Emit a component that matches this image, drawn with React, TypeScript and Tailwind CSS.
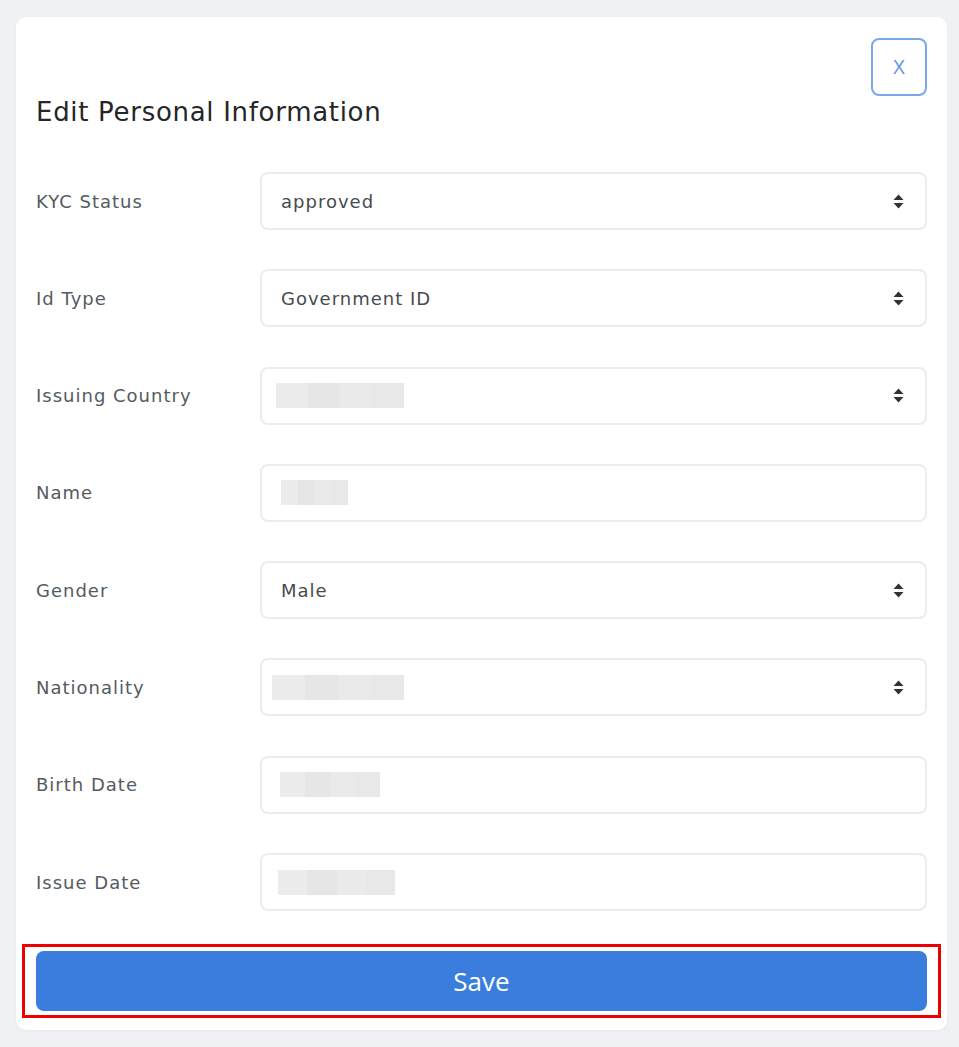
import React from "react";

const Caret = () => (
  <svg width="11" height="15" viewBox="0 0 11 15" className="shrink-0">
    <path d="M5.5 0.5 L10.5 6 L0.5 6 Z" fill="#2f3237" />
    <path d="M5.5 14.5 L10.5 9 L0.5 9 Z" fill="#2f3237" />
  </svg>
);

type Row = { label: string; value?: string; blur?: [number, number]; select: boolean };

const rows: Row[] = [
  { label: "KYC Status", value: "approved", select: true },
  { label: "Id Type", value: "Government ID", select: true },
  { label: "Issuing Country", blur: [16, 128], select: true },
  { label: "Name", blur: [21, 67], select: false },
  { label: "Gender", value: "Male", select: true },
  { label: "Nationality", blur: [12, 132], select: true },
  { label: "Birth Date", blur: [20, 100], select: false },
  { label: "Issue Date", blur: [18, 117], select: false },
];

const geo = { fontFamily: "'DejaVu Sans', 'Open Sans', sans-serif" };

export default function App() {
  return (
    <div
      className="min-h-[1047px] w-[959px] bg-[#f0f1f5] pt-[17px] pl-[16px]"
      style={{ fontFamily: "'Open Sans', 'Noto Sans', sans-serif" }}
    >
      <div className="w-[931px] rounded-[10px] bg-white px-5 pt-[21px] pb-[12px] shadow-[0_1px_3px_rgba(0,0,0,0.04)]">
        <div className="flex justify-end">
          <button className="flex h-[58px] w-[56px] items-center justify-center rounded-[8px] border-2 border-[#7aa8ea] text-[20px] text-[#5b94e6]">
            X
          </button>
        </div>
        <h2 className="-mt-[2px] text-[26px] leading-[36px] tracking-[0.7px] text-[#262626]" style={geo}>
          Edit Personal Information
        </h2>
        <div className="mt-[42px] flex flex-col gap-[39.3px]">
          {rows.map((r) => (
            <div key={r.label} className="flex items-center">
              <div className="w-[224px] text-[18px] tracking-[1px] text-[#555b61]" style={geo}>{r.label}</div>
              <div className="flex h-[58px] flex-1 items-center rounded-[8px] border-2 border-[#ececec] pr-[21px]">
                {r.value ? (
                  <span className="pl-[19px] text-[18px] tracking-[1px] text-[#474b50]" style={geo}>{r.value}</span>
                ) : (
                  <div className="flex h-[25px]" style={{ marginLeft: r.blur![0] - 2, width: r.blur![1] }}>
                    <div className="h-full flex-1 bg-[#ececec]" />
                    <div className="h-full flex-1 bg-[#e6e6e6]" />
                    <div className="h-full flex-1 bg-[#eaeaea]" />
                    <div className="h-full flex-1 bg-[#e8e8e8]" />
                  </div>
                )}
                {r.select && (
                  <div className="ml-auto">
                    <Caret />
                  </div>
                )}
              </div>
            </div>
          ))}
        </div>
        <div className="mt-[33px] -mx-[14px] border-[3px] border-[#ee0000] p-[4px_11px]">
          <button className="h-[60px] w-full rounded-[8px] bg-[#3b7ddd] text-[26px] text-white">
            Save
          </button>
        </div>
      </div>
    </div>
  );
}
